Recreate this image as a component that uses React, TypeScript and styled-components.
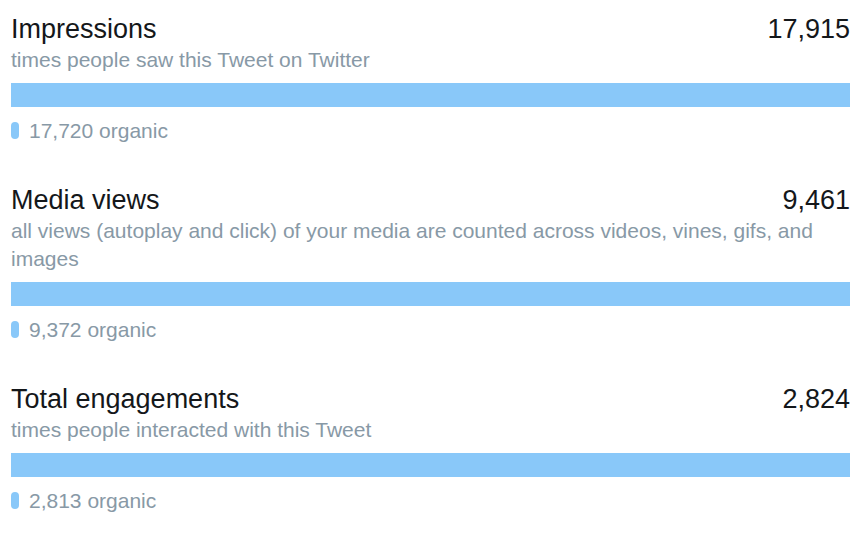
import React from "react";
import styled, { createGlobalStyle } from "styled-components";

const GlobalStyle = createGlobalStyle`
  html, body {
    margin: 0;
    padding: 0;
    background: #ffffff;
  }
  body {
    font-family: "Liberation Sans", Arial, Helvetica, sans-serif;
  }
`;

const Page = styled.div`
  padding: 12px 15px 0 11px;
  display: flex;
  flex-direction: column;
  gap: 39px;
`;

const Section = styled.section`
  display: flex;
  flex-direction: column;
`;

const Header = styled.div`
  display: flex;
  justify-content: space-between;
  align-items: baseline;
  font-size: 27px;
  line-height: 34px;
  color: #14171a;
`;

const Title = styled.span``;

const Value = styled.span``;

const Description = styled.div`
  margin-top: -0.5px;
  font-size: 21px;
  line-height: 28px;
  color: #8899a6;
`;

const Bar = styled.div`
  margin-top: 9.5px;
  height: 24px;
  background: #89c8f9;
`;

const Organic = styled.div`
  margin-top: 10px;
  display: flex;
  align-items: center;
  gap: 10px;
  font-size: 21px;
  line-height: 27px;
  color: #8899a6;
`;

const Pill = styled.span`
  width: 8px;
  height: 17px;
  border-radius: 4px;
  background: #89c8f9;
`;

type Metric = {
  title: string;
  value: string;
  description: string;
  organic: string;
};

const metrics: Metric[] = [
  {
    title: "Impressions",
    value: "17,915",
    description: "times people saw this Tweet on Twitter",
    organic: "17,720",
  },
  {
    title: "Media views",
    value: "9,461",
    description:
      "all views (autoplay and click) of your media are counted across videos, vines, gifs, and images",
    organic: "9,372",
  },
  {
    title: "Total engagements",
    value: "2,824",
    description: "times people interacted with this Tweet",
    organic: "2,813",
  },
];

export default function App() {
  return (
    <>
      <GlobalStyle />
      <Page>
        {metrics.map((m) => (
          <Section key={m.title}>
            <Header>
              <Title>{m.title}</Title>
              <Value>{m.value}</Value>
            </Header>
            <Description>{m.description}</Description>
            <Bar />
            <Organic>
              <Pill />
              <span>{m.organic} organic</span>
            </Organic>
          </Section>
        ))}
      </Page>
    </>
  );
}
